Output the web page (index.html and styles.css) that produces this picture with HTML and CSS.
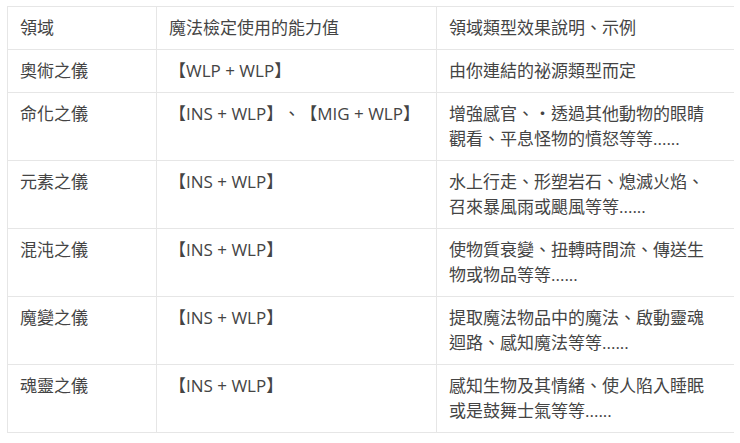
FILE: index.html
```html
<!DOCTYPE html>
<html lang="zh-Hant">
<head>
<meta charset="utf-8">
<title>領域</title>
<link rel="stylesheet" href="styles.css">
</head>
<body>
<table class="domain-table">
  <colgroup>
    <col class="col-name">
    <col class="col-stat">
    <col class="col-desc">
  </colgroup>
  <thead>
    <tr><th>領域</th><th>魔法檢定使用的能力值</th><th>領域類型效果說明、示例</th></tr>
  </thead>
  <tbody>
    <tr><td>奧術之儀</td><td>【WLP + WLP】</td><td class="desc">由你連結的祕源類型而定</td></tr>
    <tr><td>命化之儀</td><td>【INS + WLP】、【MIG + WLP】</td><td class="desc">增強感官、・透過其他動物的眼睛觀看、平息怪物的憤怒等等......</td></tr>
    <tr><td>元素之儀</td><td>【INS + WLP】</td><td class="desc">水上行走、形塑岩石、熄滅火焰、召來暴風雨或颶風等等......</td></tr>
    <tr><td>混沌之儀</td><td>【INS + WLP】</td><td class="desc">使物質衰變、扭轉時間流、傳送生物或物品等等......</td></tr>
    <tr><td>魔變之儀</td><td>【INS + WLP】</td><td class="desc">提取魔法物品中的魔法、啟動靈魂迴路、感知魔法等等......</td></tr>
    <tr><td>魂靈之儀</td><td>【INS + WLP】</td><td class="desc">感知生物及其情緒、使人陷入睡眠或是鼓舞士氣等等......</td></tr>
  </tbody>
</table>
</body>
</html>
```

FILE: styles.css
```css
html, body {
  background: #ffffff;
}
body {
  margin: 6px 6px 0 7px;
  font-family: "Open Sans", "Noto Sans CJK TC", sans-serif;
  color: #444444;
  font-size: 17px;
  line-height: 25px;
  text-spacing-trim: space-all;
}
.domain-table {
  border-collapse: collapse;
  table-layout: fixed;
  width: 727px;
}
.col-name { width: 149px; }
.col-stat { width: 280px; }
.col-desc { width: 298px; }
.domain-table th,
.domain-table td {
  border: 1px solid #e6e6e6;
  padding: 8px 12px 9px 12px;
  text-align: left;
  vertical-align: top;
  font-weight: normal;
}
.domain-table td.desc,
.domain-table th:last-child {
  padding-right: 22px;
}
```
